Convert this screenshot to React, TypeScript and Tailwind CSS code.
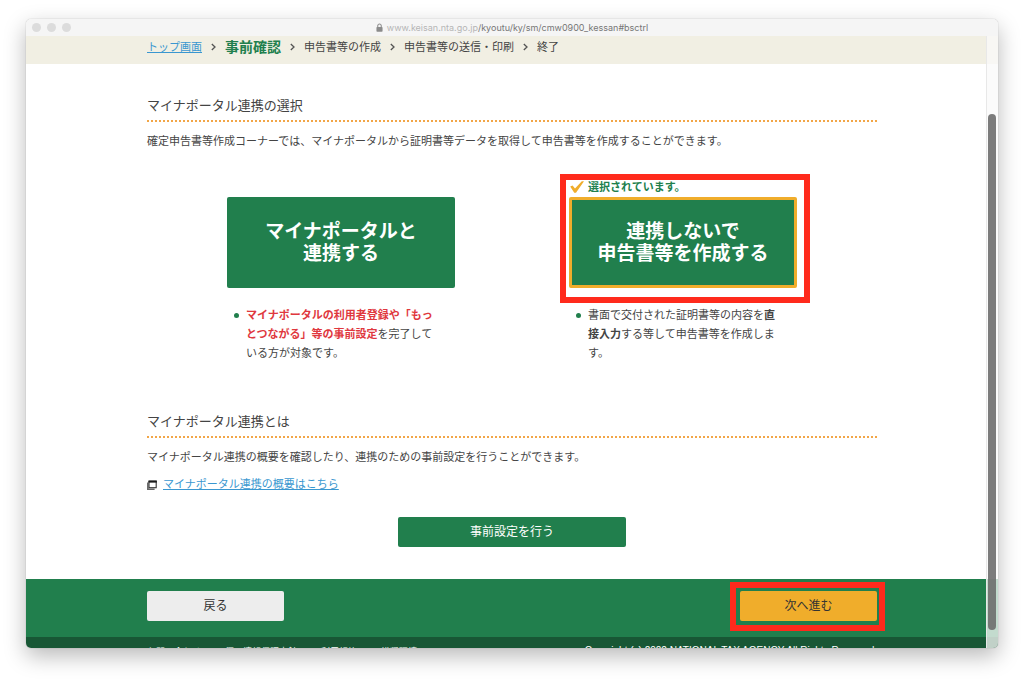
import React from 'react';
import clsx from 'clsx';

const steps = ['トップ画面', '事前確認', '申告書等の作成', '申告書等の送信・印刷', '終了'];
const footerLinks = ['お問い合わせ', '個人情報保護方針', '利用規約', '推奨環境'];

const Chevron = () => (
  <svg viewBox="0 0 5 8" className="h-2 w-[5px] shrink-0" fill="none" stroke="#555" strokeWidth="1.3">
    <path d="M0.8 1 4 4 0.8 7" />
  </svg>
);

const LockIcon = () => (
  <svg viewBox="0 0 8 10" className="h-[9px] w-[7px] shrink-0">
    <path d="M2 5V3a2 2 0 0 1 4 0v2" fill="none" stroke="#8b8b8b" strokeWidth="1.2" />
    <rect x="0.5" y="4.4" width="7" height="5.4" rx="0.9" fill="#8b8b8b" />
  </svg>
);

const CheckIcon = () => (
  <svg viewBox="0 0 14 12" className="h-3 w-[14px] shrink-0">
    <path d="M0.2 5.4 2.6 4.4 5 7.4 11.8 0.2 14 0.2 6 11.8 4.2 11.8Z" fill="#f0ad2b" />
  </svg>
);

const NewWindowIcon = () => (
  <svg viewBox="0 0 10 10" className="h-[10px] w-[10px] shrink-0">
    <path d="M0.8 2.5V9.2H7.6" fill="none" stroke="#666" strokeWidth="1.5" />
    <rect x="2" y="1.5" width="7.2" height="6.2" fill="#fff" stroke="#333" strokeWidth="1.1" />
    <rect x="1.5" y="0.4" width="8.3" height="2.2" fill="#1a1a1a" />
  </svg>
);

// Red marker drawn around a control
const Marker = ({ className }: { className: string }) => (
  <div className={clsx('pointer-events-none absolute border-6 border-[#ff2a1c]', className)} />
);

interface ChoiceProps {
  lines: [string, string];
  selected?: boolean;
  children: React.ReactNode;
}

const Choice: React.FC<ChoiceProps> = ({ lines, selected = false, children }) => (
  <div className="w-[228px]">
    <div className="relative">
      <div className="flex h-5 items-center gap-1 pl-px text-[11px] font-bold text-[#217f4d]">
        {selected && (
          <>
            <CheckIcon />
            <span>選択されています。</span>
          </>
        )}
      </div>
      <button
        type="button"
        aria-pressed={selected}
        className={clsx(
          'h-[91px] w-full rounded-xs bg-[#217f4d] text-[19px] leading-[22px] font-bold text-white',
          selected && 'border-3 border-[#f0ad2b]'
        )}
      >
        {lines[0]}
        <br />
        {lines[1]}
      </button>
      {selected && <Marker className="-top-[3px] -right-[13px] -bottom-[15px] -left-[9px]" />}
    </div>
    <ul className="mt-[18px] pr-5 pl-[19px]">
      <li className="relative">
        <span className="absolute top-[7px] -left-[12px] h-[5px] w-[5px] rounded-full bg-[#217f4d]" />
        {children}
      </li>
    </ul>
  </div>
);

const SectionTitle = ({ children }: { children: React.ReactNode }) => (
  <h2 className="border-b-2 border-dotted border-[#f2a647] pb-1 text-[13px] leading-5">{children}</h2>
);

export default function App() {
  return (
    <div className="h-screen bg-white px-[26px] pt-[19px] pb-8 font-['Liberation_Sans','Noto_Sans_CJK_JP',sans-serif] text-[#444]">
      <div className="relative flex h-full flex-col overflow-hidden rounded-[5px] bg-white shadow-[0_8px_22px_rgba(0,0,0,0.28),0_0_1px_rgba(0,0,0,0.4)]">
        <div className="relative flex h-[17px] shrink-0 items-center justify-center gap-1 bg-[#f5f5f5]">
          <div className="absolute left-[6px] flex gap-[6px]">
            <span className="h-[9px] w-[9px] rounded-full bg-[#dcdcdc]" />
            <span className="h-[9px] w-[9px] rounded-full bg-[#dcdcdc]" />
            <span className="h-[9px] w-[9px] rounded-full bg-[#dcdcdc]" />
          </div>
          <LockIcon />
          <span className="font-['Inter',sans-serif] text-[9px] leading-3 text-[#777]">
            <span className="text-[#b5b5b5]">www.keisan.nta.go.jp</span>/kyoutu/ky/sm/cmw0900_kessan#bsctrl
          </span>
        </div>

        <nav className="h-7 shrink-0 bg-[#f1efe3]">
          <ol className="mx-auto flex h-[22px] max-w-[730px] items-center gap-[9px] text-[11px] leading-4">
            {steps.map((step, i) => (
              <React.Fragment key={step}>
                {i > 0 && <Chevron />}
                <li className={clsx(i === 1 && 'text-[14px] font-bold text-[#217f4d]')}>
                  {i === 0 ? (
                    <a href="#top" className="text-[#3a97d0] underline">{step}</a>
                  ) : (
                    step
                  )}
                </li>
              </React.Fragment>
            ))}
          </ol>
        </nav>

        <main className="mx-auto w-full max-w-[730px] shrink-0 pt-8 pb-8 text-[11px] leading-[19px]">
          <section>
            <SectionTitle>マイナポータル連携の選択</SectionTitle>
            <p className="mt-[10px]">
              確定申告書等作成コーナーでは、マイナポータルから証明書等データを取得して申告書等を作成することができます。
            </p>
            <div className="mt-[26px] flex justify-center gap-[114px]">
              <Choice lines={['マイナポータルと', '連携する']}>
                <strong className="text-[#e0383e]">マイナポータルの利用者登録や「もっとつながる」等の事前設定</strong>
                を完了している方が対象です。
              </Choice>
              <Choice lines={['連携しないで', '申告書等を作成する']} selected>
                書面で交付された証明書等の内容を<strong>直接入力</strong>する等して申告書等を作成します。
              </Choice>
            </div>
          </section>

          <section className="mt-[49px]">
            <SectionTitle>マイナポータル連携とは</SectionTitle>
            <p className="mt-[10px]">
              マイナポータル連携の概要を確認したり、連携のための事前設定を行うことができます。
            </p>
            <p className="mt-2 flex items-center gap-[6px]">
              <NewWindowIcon />
              <a href="#about" className="text-[#3a97d0] underline">マイナポータル連携の概要はこちら</a>
            </p>
            <button type="button" className="mx-auto mt-[23px] block h-[30px] w-[228px] rounded-xs bg-[#217f4d] text-[12px] text-white">
              事前設定を行う
            </button>
          </section>
        </main>

        <div className="shrink-0 bg-[#217f4d] pt-3 pb-4">
          <div className="mx-auto flex max-w-[730px] justify-between text-[12px] text-[#333]">
            <button type="button" className="h-[30px] w-[137px] rounded-xs bg-[#ededed]">戻る</button>
            <div className="relative">
              <button type="button" className="h-[30px] w-[137px] rounded-xs bg-[#f0ad2b]">次へ進む</button>
              <Marker className="-top-[9px] -right-[8px] -bottom-[10px] -left-[10px]" />
            </div>
          </div>
        </div>

        <footer className="shrink-0 bg-[#185735] pt-[9px]">
          <div className="mx-auto flex max-w-[730px] justify-between text-white">
            <div className="flex gap-6 text-[9px] leading-3">
              {footerLinks.map((link) => (
                <a key={link} href="#footer">{link}</a>
              ))}
            </div>
            <p className="text-[10px] leading-[10px]">Copyright (c) 2022 NATIONAL TAX AGENCY All Rights Reserved.</p>
          </div>
        </footer>

        {/* Scrollbar sits over the page */}
        <div className="absolute top-[17px] right-0 bottom-0 w-3 border-l border-[#e8e8e8] bg-[#fafafa]/75">
          <div className="absolute top-[78px] right-[2px] bottom-[18px] w-2 rounded-full bg-[#6e6e6e]/90" />
        </div>
      </div>
    </div>
  );
}
